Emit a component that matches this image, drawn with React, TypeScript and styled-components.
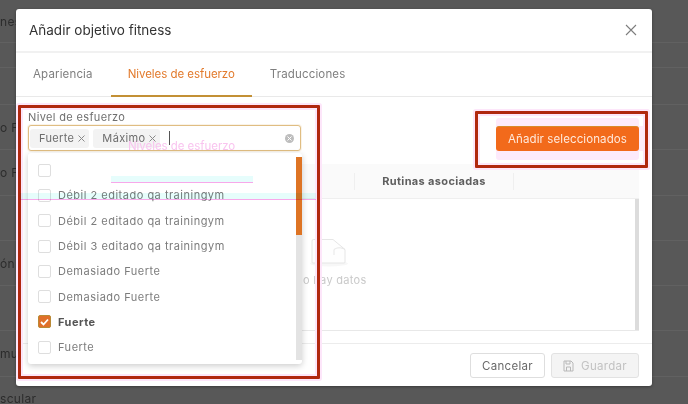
import { createGlobalStyle } from "styled-components";
import styled from "styled-components";

const levels = [
  { name: "", checked: false },
  { name: "Débil 2 editado qa trainingym", checked: false },
  { name: "Débil 2 editado qa trainingym", checked: false },
  { name: "Débil 3 editado qa trainingym", checked: false },
  { name: "Demasiado Fuerte", checked: false },
  { name: "Demasiado Fuerte", checked: false },
  { name: "Fuerte", checked: true },
  { name: "Fuerte", checked: false },
];

const backdropRows = [
  { text: "nes", height: 43 },
  { text: "", height: 25 },
  { text: "", height: 37 },
  { text: "o Fitness", height: 45.3 },
  { text: "o Fitness", height: 45.3 },
  { text: "", height: 45.3 },
  { text: "ón física", height: 45.3 },
  { text: "", height: 45.3 },
  { text: "musculo", height: 45.3 },
  { text: "scular", height: 45.3 },
];

const TagClose = () => (
  <svg width="7" height="7" viewBox="0 0 7 7">
    <path d="M.5.500l6 6M6.500.500l-6 6" stroke="#8a8a8a" strokeWidth="1" fill="none" />
  </svg>
);

const App = () => {
  return (
    <Page>
      <GlobalStyle />
      <Backdrop>
        {backdropRows.map((row, i) => (
          <BackdropRow key={i} $height={row.height}>
            {row.text}
          </BackdropRow>
        ))}
      </Backdrop>

      <Modal>
        <Header>
          <Title>Añadir objetivo fitness</Title>
          <CloseIcon width="12" height="12" viewBox="0 0 12 12">
            <path d="M1 1l10 10M11 1L1 11" stroke="#7d7d7d" strokeWidth="1.1" fill="none" />
          </CloseIcon>
        </Header>

        <Tabs>
          <Tab>Apariencia</Tab>
          <Tab $active>Niveles de esfuerzo</Tab>
          <Tab>Traducciones</Tab>
        </Tabs>

        <Body>
          <TopRow>
            <Field>
              <FieldLabel>Nivel de esfuerzo</FieldLabel>
              <SelectBox>
                <Tag>
                  Fuerte
                  <TagClose />
                </Tag>
                <Tag>
                  Máximo
                  <TagClose />
                </Tag>
                <Caret />
                <ClearIcon>
                  <svg width="5" height="5" viewBox="0 0 5 5">
                    <path d="M.5.500l4 4M4.500.500l-4 4" stroke="#fff" strokeWidth="1" fill="none" />
                  </svg>
                </ClearIcon>
              </SelectBox>
            </Field>
            <PrimaryButton>Añadir seleccionados</PrimaryButton>
          </TopRow>

          <TableWrap>
            <TableHead>
              <HeadCell $kind="first" />
              <HeadCell $kind="title">Rutinas asociadas</HeadCell>
              <HeadCell $kind="last" />
            </TableHead>
            <TableBody>
              <EmptyIcon width="38" height="29" viewBox="0 0 38 29">
                <ellipse cx="19" cy="25.500" rx="19" ry="3" fill="#f7f7f7" />
                <path
                  d="M2 3a1.500 1.500 0 0 1 1.500-1.500H23l12 10V24a1 1 0 0 1-1 1H3a1 1 0 0 1-1-1z"
                  fill="#fefefe"
                  stroke="#e6e6e6"
                />
                <path d="M24 17V11.500c3-2 7-2.500 11 0" fill="none" stroke="#e6e6e6" />
              </EmptyIcon>
              <EmptyText>No hay datos</EmptyText>
              <TableScroll />
            </TableBody>
          </TableWrap>
        </Body>

        <Footer>
          <GhostButton>Cancelar</GhostButton>
          <DisabledButton>
            <svg width="11" height="12" viewBox="0 0 11 12">
              <path
                d="M1 1h7l2 2v8H1z M3 1v3h4V1 M3.500 11V7h4v4"
                fill="none"
                stroke="#b8b8b8"
                strokeWidth="1"
              />
            </svg>
            Guardar
          </DisabledButton>
        </Footer>

        <Dropdown>
          {levels.map((level, i) => (
            <Option key={i}>
              <Check $checked={level.checked}>
                {level.checked && (
                  <svg width="9" height="8" viewBox="0 0 9 8">
                    <path d="M1 4l2.500 2.500L8 1.500" fill="none" stroke="#fff" strokeWidth="1.8" />
                  </svg>
                )}
              </Check>
              <OptionText $checked={level.checked}>{level.name}</OptionText>
            </Option>
          ))}
          <DropScroll>
            <DropThumb />
          </DropScroll>
        </Dropdown>

        <GhostTabText>Niveles de esfuerzo</GhostTabText>
        <GhostTabLine />
        <GhostBand />
      </Modal>

      <Callout $left={18} $top={105} $width={302} $height={274} />
      <Callout $left={475} $top={111} $width={173} $height={57} />
    </Page>
  );
};

const GlobalStyle = createGlobalStyle`
  html, body {
    margin: 0;
    padding: 0;
    background: #585858;
  }
  * {
    box-sizing: border-box;
  }
`;

const Page = styled.div`
  position: relative;
  width: 688px;
  height: 404px;
  overflow: hidden;
  background: #585858;
  font-family: Inter, "Noto Sans", "Liberation Sans", sans-serif;
`;

const Backdrop = styled.div`
  display: flex;
  flex-direction: column;
`;

const BackdropRow = styled.div<{ $height: number }>`
  display: flex;
  align-items: center;
  flex: none;
  height: ${(p) => p.$height}px;
  border-bottom: 1px solid #616161;
  color: #2c2c2c;
  font-size: 12px;
  letter-spacing: 0.3px;
  white-space: nowrap;
`;

const Modal = styled.div`
  position: absolute;
  left: 16px;
  top: 9px;
  width: 636px;
  height: 377px;
  display: flex;
  flex-direction: column;
  background: #fff;
  border-radius: 3px;
  box-shadow: 0 1px 3px rgba(0, 0, 0, 0.35);
`;

const Header = styled.div`
  display: flex;
  flex: none;
  align-items: center;
  justify-content: space-between;
  height: 44px;
  padding: 0 15px 0 13px;
  border-bottom: 2px solid #f1f1f1;
`;

const Title = styled.div`
  color: #333;
  font-size: 13.500px;
  font-weight: 400;
`;

const CloseIcon = styled.svg`
  display: block;
`;

const Tabs = styled.div`
  display: flex;
  flex: none;
  gap: 1px;
  height: 44px;
  border-bottom: 1px solid #e9e9e9;
`;

const Tab = styled.div<{ $active?: boolean }>`
  display: flex;
  align-items: center;
  padding: 0 17px;
  margin-bottom: -1px;
  color: ${(p) => (p.$active ? "#e27a2c" : "#7f7f7f")};
  font-size: 11.500px;
  letter-spacing: ${(p) => (p.$active ? "-0.05px" : "0.15px")};
  border-bottom: 2px solid ${(p) => (p.$active ? "#c39035" : "transparent")};
`;

const Body = styled.div`
  flex: 1;
  min-height: 0;
  display: flex;
  flex-direction: column;
  padding: 13px 13px 12px 12px;
  border-bottom: 1px solid #ececec;
`;

const TopRow = styled.div`
  display: flex;
  flex: none;
  align-items: flex-end;
  justify-content: space-between;
`;

const Field = styled.div`
  display: flex;
  flex-direction: column;
  gap: 1px;
  width: 273px;
`;

const FieldLabel = styled.div`
  color: #6f6f6f;
  font-size: 11px;
  line-height: 14px;
  letter-spacing: 0.35px;
`;

const SelectBox = styled.div`
  display: flex;
  align-items: center;
  gap: 4px;
  height: 26px;
  padding: 0 6px 0 1px;
  background: #fff;
  border: 1px solid #e0bd82;
  border-radius: 3px;
  box-shadow: 0 0 0 1px rgba(224, 189, 130, 0.18);
`;

const Tag = styled.div`
  display: flex;
  align-items: center;
  gap: 4px;
  height: 19px;
  padding: 0 4px 0 9px;
  background: #f3f3f3;
  border-radius: 3px;
  color: #6d6d6d;
  font-size: 11px;
  letter-spacing: 0.35px;
`;

const Caret = styled.div`
  width: 1px;
  height: 14px;
  margin-left: 5px;
  background: #555;
`;

const ClearIcon = styled.div`
  display: flex;
  align-items: center;
  justify-content: center;
  width: 9px;
  height: 9px;
  margin-left: auto;
  border-radius: 50%;
  background: #bdbdbd;
`;

const PrimaryButton = styled.div`
  display: flex;
  align-items: center;
  justify-content: center;
  width: 143px;
  height: 25px;
  background: #f26a1b;
  border-top: 1px solid #d98a2b;
  border-radius: 3px;
  color: #ffe9dc;
  font-size: 11.500px;
  letter-spacing: 0.1px;
  box-shadow: 0 -8px 0 #fdeafb, 8px 0 0 #fdeafb, 0 9px 0 #fdeafb;
`;

const TableWrap = styled.div`
  flex: 1;
  display: flex;
  flex-direction: column;
  margin-top: 13px;
  border-bottom: 1px solid #e8e8e8;
`;

const TableHead = styled.div`
  display: flex;
  flex: none;
  align-items: center;
  height: 35px;
  background: #fafafa;
  border-bottom: 1px solid #efefef;
`;

const headCellWidths = { first: "0 0 327px", title: "0 0 159px", last: "1" };

const HeadCell = styled.div<{ $kind: "first" | "title" | "last" }>`
  flex: ${(p) => headCellWidths[p.$kind]};
  height: 17px;
  display: flex;
  align-items: center;
  justify-content: center;
  border-right: ${(p) => (p.$kind === "last" ? "none" : "1px solid #efefef")};
  color: #5f5f5f;
  font-size: 11px;
  font-weight: 700;
  letter-spacing: 0.35px;
`;

const TableBody = styled.div`
  position: relative;
  flex: 1;
  display: flex;
  flex-direction: column;
  align-items: center;
  padding-top: 39px;
`;

const TableScroll = styled.div`
  position: absolute;
  right: 0;
  top: 0;
  bottom: 0;
  width: 4px;
  background: #dcdcdc;
`;

const EmptyIcon = styled.svg`
  display: block;
  margin-right: 10px;
`;

const EmptyText = styled.div`
  margin-top: 6px;
  margin-right: 6px;
  color: #c9c9c9;
  font-size: 11px;
  letter-spacing: 0.3px;
  white-space: nowrap;
`;

const Footer = styled.div`
  display: flex;
  flex: none;
  justify-content: flex-end;
  gap: 6px;
  padding: 9px 13px 8px;
`;

const GhostButton = styled.div`
  display: flex;
  align-items: center;
  justify-content: center;
  width: 75px;
  height: 25px;
  background: #fff;
  border: 1px solid #dedede;
  border-radius: 3px;
  color: #6a6a6a;
  font-size: 11.500px;
  letter-spacing: 0.3px;
`;

const DisabledButton = styled.div`
  display: flex;
  align-items: center;
  justify-content: center;
  gap: 7px;
  width: 88px;
  height: 25px;
  background: #f4f4f4;
  border: 1px solid #e2e2e2;
  border-radius: 3px;
  color: #c2c2c2;
  font-size: 11.500px;
  letter-spacing: 0.3px;
`;

const Dropdown = styled.div`
  position: absolute;
  left: 12px;
  top: 144px;
  width: 274px;
  height: 211px;
  display: flex;
  flex-direction: column;
  padding-top: 4.500px;
  background: #fff;
  border-radius: 3px;
  box-shadow: 0 2px 6px rgba(0, 0, 0, 0.2);
  z-index: 2;
`;

const Option = styled.div`
  display: flex;
  flex: none;
  align-items: center;
  gap: 7px;
  height: 25.300px;
  padding-left: 10px;
`;

const Check = styled.div<{ $checked: boolean }>`
  display: flex;
  align-items: center;
  justify-content: center;
  width: 13px;
  height: 13px;
  background: ${(p) => (p.$checked ? "#e0702a" : "#fff")};
  border: 1px solid ${(p) => (p.$checked ? "#b98a36" : "#dedede")};
  border-radius: 2px;
`;

const OptionText = styled.div<{ $checked: boolean }>`
  color: ${(p) => (p.$checked ? "#555" : "#7c7c7c")};
  font-size: 11px;
  font-weight: ${(p) => (p.$checked ? 700 : 400)};
  letter-spacing: 0.5px;
`;

const DropScroll = styled.div`
  position: absolute;
  right: 0;
  top: 4px;
  bottom: 4px;
  width: 6px;
  background: #e3e3e3;
`;

const DropThumb = styled.div`
  height: 78px;
  background: #de7424;
`;

const GhostTabText = styled.div`
  position: absolute;
  left: 112px;
  top: 130px;
  color: #f9c4ef;
  font-size: 11.500px;
  letter-spacing: -0.05px;
  pointer-events: none;
  z-index: 3;
`;

const GhostTabLine = styled.div`
  position: absolute;
  left: 95px;
  top: 167px;
  width: 142px;
  height: 7px;
  background: #e6fdfc;
  border-bottom: 1px solid #f7a8ea;
  z-index: 3;
`;

const GhostBand = styled.div`
  position: absolute;
  left: 4px;
  top: 184px;
  width: 296px;
  height: 7px;
  background: #e6fdfb;
  border-bottom: 1px solid #f7a8ea;
  mix-blend-mode: multiply;
  z-index: 3;
`;

const Callout = styled.div<{ $left: number; $top: number; $width: number; $height: number }>`
  position: absolute;
  left: ${(p) => p.$left}px;
  top: ${(p) => p.$top}px;
  width: ${(p) => p.$width}px;
  height: ${(p) => p.$height}px;
  border: 3px solid #b0280f;
  border-radius: 1px;
  box-shadow: 0 0 0 2px #fde6fa, inset 0 0 0 2px #fde6fa;
`;

export default App;
